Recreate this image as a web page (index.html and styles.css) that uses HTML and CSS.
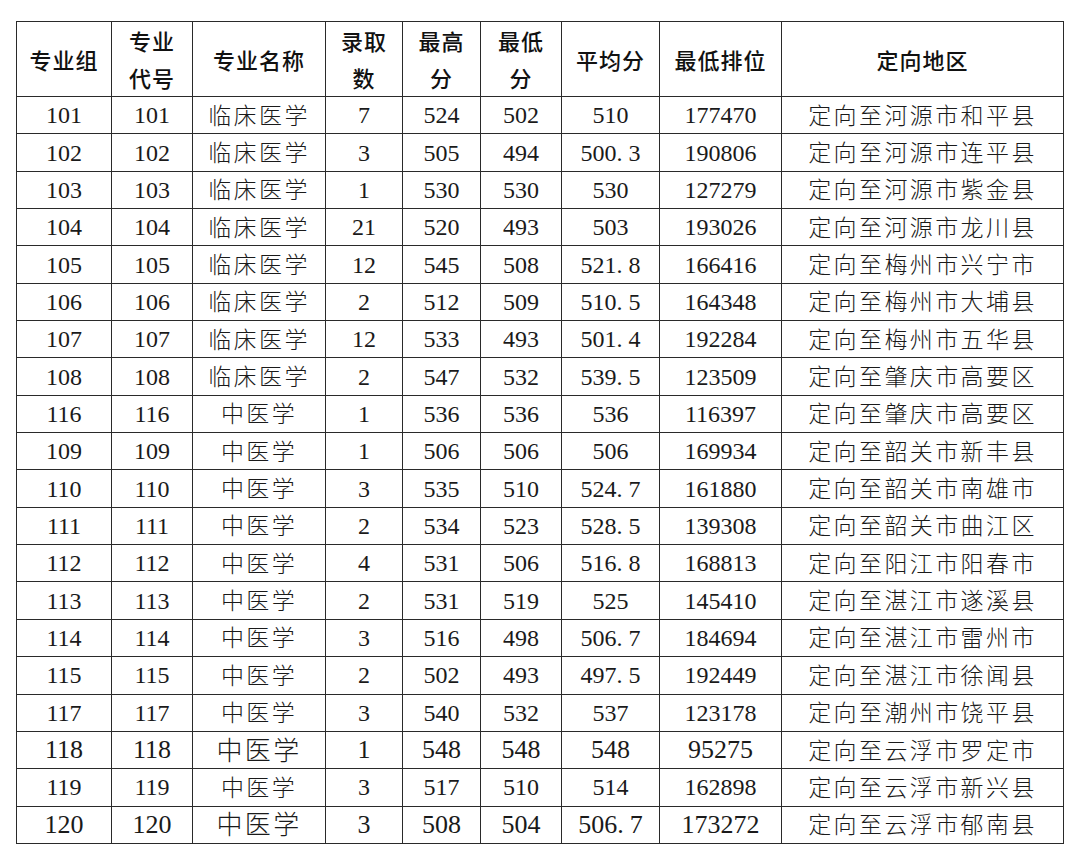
FILE: index.html
```html
<!DOCTYPE html>
<html lang="zh-CN">
<head>
<meta charset="utf-8">
<title>定向招生录取</title>
<link rel="stylesheet" href="styles.css">
</head>
<body>
<div class="page">
<table class="grid">
  <colgroup>
    <col class="c1"><col class="c2"><col class="c3"><col class="c4"><col class="c5"><col class="c6"><col class="c7"><col class="c8"><col class="c9">
  </colgroup>
  <thead>
    <tr>
      <th>专业组</th>
      <th>专业<br>代号</th>
      <th>专业名称</th>
      <th>录取<br>数</th>
      <th>最高<br>分</th>
      <th>最低<br>分</th>
      <th>平均分</th>
      <th>最低排位</th>
      <th>定向地区</th>
    </tr>
  </thead>
  <tbody>
    <tr><td>101</td><td>101</td><td class="zh">临床医学</td><td>7</td><td>524</td><td>502</td><td>510</td><td>177470</td><td class="zh area">定向至河源市和平县</td></tr>
    <tr><td>102</td><td>102</td><td class="zh">临床医学</td><td>3</td><td>505</td><td>494</td><td>500<span class="dot">.</span>3</td><td>190806</td><td class="zh area">定向至河源市连平县</td></tr>
    <tr><td>103</td><td>103</td><td class="zh">临床医学</td><td>1</td><td>530</td><td>530</td><td>530</td><td>127279</td><td class="zh area">定向至河源市紫金县</td></tr>
    <tr><td>104</td><td>104</td><td class="zh">临床医学</td><td>21</td><td>520</td><td>493</td><td>503</td><td>193026</td><td class="zh area">定向至河源市龙川县</td></tr>
    <tr><td>105</td><td>105</td><td class="zh">临床医学</td><td>12</td><td>545</td><td>508</td><td>521<span class="dot">.</span>8</td><td>166416</td><td class="zh area">定向至梅州市兴宁市</td></tr>
    <tr><td>106</td><td>106</td><td class="zh">临床医学</td><td>2</td><td>512</td><td>509</td><td>510<span class="dot">.</span>5</td><td>164348</td><td class="zh area">定向至梅州市大埔县</td></tr>
    <tr><td>107</td><td>107</td><td class="zh">临床医学</td><td>12</td><td>533</td><td>493</td><td>501<span class="dot">.</span>4</td><td>192284</td><td class="zh area">定向至梅州市五华县</td></tr>
    <tr><td>108</td><td>108</td><td class="zh">临床医学</td><td>2</td><td>547</td><td>532</td><td>539<span class="dot">.</span>5</td><td>123509</td><td class="zh area">定向至肇庆市高要区</td></tr>
    <tr><td>116</td><td>116</td><td class="zh">中医学</td><td>1</td><td>536</td><td>536</td><td>536</td><td>116397</td><td class="zh area">定向至肇庆市高要区</td></tr>
    <tr><td>109</td><td>109</td><td class="zh">中医学</td><td>1</td><td>506</td><td>506</td><td>506</td><td>169934</td><td class="zh area">定向至韶关市新丰县</td></tr>
    <tr><td>110</td><td>110</td><td class="zh">中医学</td><td>3</td><td>535</td><td>510</td><td>524<span class="dot">.</span>7</td><td>161880</td><td class="zh area">定向至韶关市南雄市</td></tr>
    <tr><td>111</td><td>111</td><td class="zh">中医学</td><td>2</td><td>534</td><td>523</td><td>528<span class="dot">.</span>5</td><td>139308</td><td class="zh area">定向至韶关市曲江区</td></tr>
    <tr><td>112</td><td>112</td><td class="zh">中医学</td><td>4</td><td>531</td><td>506</td><td>516<span class="dot">.</span>8</td><td>168813</td><td class="zh area">定向至阳江市阳春市</td></tr>
    <tr><td>113</td><td>113</td><td class="zh">中医学</td><td>2</td><td>531</td><td>519</td><td>525</td><td>145410</td><td class="zh area">定向至湛江市遂溪县</td></tr>
    <tr><td>114</td><td>114</td><td class="zh">中医学</td><td>3</td><td>516</td><td>498</td><td>506<span class="dot">.</span>7</td><td>184694</td><td class="zh area">定向至湛江市雷州市</td></tr>
    <tr><td>115</td><td>115</td><td class="zh">中医学</td><td>2</td><td>502</td><td>493</td><td>497<span class="dot">.</span>5</td><td>192449</td><td class="zh area">定向至湛江市徐闻县</td></tr>
    <tr><td>117</td><td>117</td><td class="zh">中医学</td><td>3</td><td>540</td><td>532</td><td>537</td><td>123178</td><td class="zh area">定向至潮州市饶平县</td></tr>
    <tr class="big"><td>118</td><td>118</td><td class="zh">中医学</td><td>1</td><td>548</td><td>548</td><td>548</td><td>95275</td><td class="zh area">定向至云浮市罗定市</td></tr>
    <tr><td>119</td><td>119</td><td class="zh">中医学</td><td>3</td><td>517</td><td>510</td><td>514</td><td>162898</td><td class="zh area">定向至云浮市新兴县</td></tr>
    <tr class="big"><td>120</td><td>120</td><td class="zh">中医学</td><td>3</td><td>508</td><td>504</td><td>506<span class="dot">.</span>7</td><td>173272</td><td class="zh area">定向至云浮市郁南县</td></tr>
  </tbody>
</table>
</div>
</body>
</html>
```

FILE: styles.css
```css
html, body {
  margin: 0;
  padding: 0;
  background: #ffffff;
}

.page {
  padding: 21px 0 0 16px;
}

.grid {
  border-collapse: collapse;
  table-layout: fixed;
  width: 1047px;
  border: 1px solid #555;
  color: #111;
}

.c1 { width: 95px; }
.c2 { width: 81px; }
.c3 { width: 133px; }
.c4 { width: 77px; }
.c5 { width: 78px; }
.c6 { width: 81px; }
.c7 { width: 98px; }
.c8 { width: 122px; }
.c9 { width: 282px; }

.grid th,
.grid td {
  border: 1px solid #2a2a2a;
  padding: 0;
  text-align: center;
  vertical-align: middle;
  white-space: nowrap;
}

.grid thead tr {
  height: 74px;
}

.grid th {
  font-family: "Noto Sans CJK SC", "Noto Sans", sans-serif;
  font-size: 22px;
  font-weight: 500;
  line-height: 37px;
  letter-spacing: 1px;
}

.grid tbody tr {
  height: 37.35px;
}

.grid td {
  font-family: "Liberation Serif", "Times New Roman", "DejaVu Serif", serif;
  font-size: 24px;
  font-weight: 400;
  line-height: 30px;
  color: #1a1a1a;
}

.grid td.zh {
  font-family: "Noto Sans CJK SC", sans-serif;
  font-size: 23px;
  font-weight: 300;
  letter-spacing: 2.4px;
  padding-bottom: 3px;
}

.grid tr.big td {
  font-size: 26px;
}

.grid tr.big td.zh {
  font-size: 26px;
}

.grid tr.big td.area {
  font-size: 23px;
}

.dot {
  padding-right: 6px;
}
```
